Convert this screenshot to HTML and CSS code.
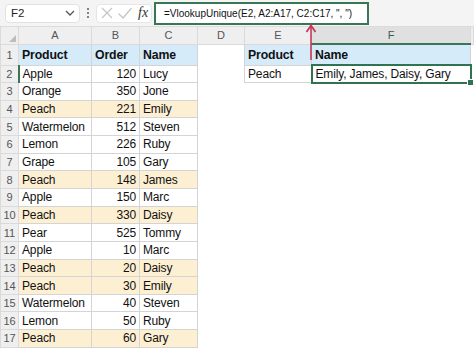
FILE: index.html
```html
<!doctype html>
<html lang="en">
<head>
  <meta charset="UTF-8">
  <title>VlookupUnique</title>
  <link rel="stylesheet" href="styles.css">
</head>
<body>
  <div class="bar">
    <div class="namebox">
      <span>F2</span>
      <svg class="chev" width="10" height="6" viewBox="0 0 10 6"><path d="M1 1l4 4 4-4" fill="none" stroke="#555" stroke-width="1.3"/></svg>
    </div>
    <div class="dots">
      <svg width="4" height="12" viewBox="0 0 4 12"><circle cx="2" cy="2" r="1.1" fill="#666"/><circle cx="2" cy="6" r="1.1" fill="#666"/><circle cx="2" cy="10" r="1.1" fill="#666"/></svg>
    </div>
    <div class="tools">
      <svg width="14" height="14" viewBox="0 0 14 14"><path d="M2 2l10 10M12 2L2 12" stroke="#c4c4c4" stroke-width="1.2"/></svg>
      <svg width="16" height="14" viewBox="0 0 16 14"><path d="M1.5 7.5l4.5 4.5L14.5 2" fill="none" stroke="#c4c4c4" stroke-width="1.2"/></svg>
      <span class="fx">fx</span>
    </div>
    <div class="formula">=VlookupUnique(E2, A2:A17, C2:C17, ", ")</div>
  </div>

  <div class="sheet">
    <table class="grid">
      <colgroup>
        <col style="width:18px"><col style="width:73px"><col style="width:48px"><col style="width:58px">
        <col style="width:47px"><col style="width:67px"><col style="width:159px"><col>
      </colgroup>
      <tr class="heads">
        <th class="corner"><span class="tri"></span></th><th>A</th><th>B</th><th>C</th><th>D</th><th>E</th><th class="sel">F</th><th></th>
      </tr>
      <tr class="r1">
        <th class="rn">1</th><td class="hd">Product</td><td class="hd">Order</td><td class="hd">Name</td><td class="blank"></td><td class="hd">Product</td><td class="hd">Name</td><td class="blank"></td>
      </tr>
      <tr>
        <th class="rn rsel">2</th><td>Apple</td><td class="num">120</td><td>Lucy</td><td class="blank"></td><td>Peach</td><td class="active">Emily, James, Daisy, Gary</td><td class="blank"></td>
      </tr>
      <tr><th class="rn">3</th><td>Orange</td><td class="num">350</td><td>Jone</td><td class="blank" colspan="4"></td></tr>
      <tr class="peach"><th class="rn">4</th><td>Peach</td><td class="num">221</td><td>Emily</td><td class="blank" colspan="4"></td></tr>
      <tr><th class="rn">5</th><td>Watermelon</td><td class="num">512</td><td>Steven</td><td class="blank" colspan="4"></td></tr>
      <tr><th class="rn">6</th><td>Lemon</td><td class="num">226</td><td>Ruby</td><td class="blank" colspan="4"></td></tr>
      <tr><th class="rn">7</th><td>Grape</td><td class="num">105</td><td>Gary</td><td class="blank" colspan="4"></td></tr>
      <tr class="peach"><th class="rn">8</th><td>Peach</td><td class="num">148</td><td>James</td><td class="blank" colspan="4"></td></tr>
      <tr><th class="rn">9</th><td>Apple</td><td class="num">150</td><td>Marc</td><td class="blank" colspan="4"></td></tr>
      <tr class="peach"><th class="rn">10</th><td>Peach</td><td class="num">330</td><td>Daisy</td><td class="blank" colspan="4"></td></tr>
      <tr><th class="rn">11</th><td>Pear</td><td class="num">525</td><td>Tommy</td><td class="blank" colspan="4"></td></tr>
      <tr><th class="rn">12</th><td>Apple</td><td class="num">10</td><td>Marc</td><td class="blank" colspan="4"></td></tr>
      <tr class="peach"><th class="rn">13</th><td>Peach</td><td class="num">20</td><td>Daisy</td><td class="blank" colspan="4"></td></tr>
      <tr class="peach"><th class="rn">14</th><td>Peach</td><td class="num">30</td><td>Emily</td><td class="blank" colspan="4"></td></tr>
      <tr><th class="rn">15</th><td>Watermelon</td><td class="num">40</td><td>Steven</td><td class="blank" colspan="4"></td></tr>
      <tr><th class="rn">16</th><td>Lemon</td><td class="num">50</td><td>Ruby</td><td class="blank" colspan="4"></td></tr>
      <tr class="peach"><th class="rn">17</th><td>Peach</td><td class="num">60</td><td>Gary</td><td class="blank" colspan="4"></td></tr>
    </table>

    <!-- arrow from F1 up to the formula -->
    <svg class="arrow" width="12" height="38" viewBox="0 0 12 38">
      <path d="M6 2V36" stroke="#c7385b" stroke-width="1.6"/>
      <path d="M1.5 8L6 1.5l4.5 6.5" fill="none" stroke="#c7385b" stroke-width="1.8"/>
    </svg>
  </div>
</body>
</html>
```

FILE: styles.css
```css
*{margin:0;
  padding:0;
  box-sizing:border-box;}
body{width:474px;
     height:351px;
     overflow:hidden;
     background:#fff;
     font-family:"Liberation Sans",Arial,sans-serif;
     position:relative;}

/* formula bar */
.bar{height:27px;
     background:#f4f4f4;
     border-bottom:1px solid #dcdcdc;
     display:flex;
     align-items:center;
     padding-left:5px;}
.namebox{width:75px; height:19px;
         background:#fff;
         border:1px solid #e2e2e2;
         border-radius:4px;
         display:flex;
         align-items:center;
         justify-content:space-between;
         padding:0 4px 0 5px;
         font-size:11.5px;
         color:#222;}
.dots{width:16px;
      display:flex;
      justify-content:center;}
.tools{width:56px; height:19px;
       background:#fff;
       border:1px solid #e6e6e6;
       border-radius:4px;
       display:flex;
       align-items:center;
       gap:3px;
       padding-left:3px;}
.fx{font-family:"Liberation Serif",serif;
    font-style:italic;
    font-size:14px;
    color:#333;
    margin-left:2px;}
.formula{width:215px; height:23px;
         margin-left:2px;
         background:#fff;
         border:2px solid #3a7654;
         font-size:10px;
         color:#111;
         padding-left:8px;
         line-height:19px;
         white-space:nowrap;}

/* sheet */
.sheet{position:relative;}
.grid{width:474px;
      table-layout:fixed;
      border-collapse:collapse;
      font-size:12px;
      letter-spacing:-0.15px;
      color:#111;}
.grid th{font-weight:normal;
         font-size:11px;
         letter-spacing:0;
         color:#555;
         background:#efefef;
         border:1px solid #dadada;}
.heads{height:17px;}
.heads th{border-top:none;}
.heads .sel{background:#e0e0e0;
            border-bottom:2px solid #3a7654;
            color:#3a5a48;}
.corner{position:relative;}
.tri{position:absolute;
     right:2px; bottom:2px;
     border-left:7px solid transparent;
     border-bottom:7px solid #bdbdbd;}
.rn{text-align:center;}
.rsel{border-right:2px solid #3a7654 !important;}
.r1{height:21px;}
tr{height:17.65px;}
td{border:1px solid #d4d4d4;
   padding:0 3px;
   white-space:nowrap;
   overflow:hidden;
   vertical-align:middle;}
td.blank{border:none;}
td.hd{background:#d6ebf9;
      font-weight:bold;
      font-size:12.3px;
      color:#111;}
td.num{text-align:right;}
.peach td{background:#fcefd2;}
.peach td.blank{background:#fff;}
td.active{border:2px solid #2f7350;
          position:relative;
          overflow:visible;}
td.active:after{content:"";
                position:absolute;
                right:-4px; bottom:-4px;
                width:5px; height:5px;
                background:#2f7350;
                border:1px solid #fff;}

.arrow{position:absolute;
       left:305px;
       top:-3px;}
```
